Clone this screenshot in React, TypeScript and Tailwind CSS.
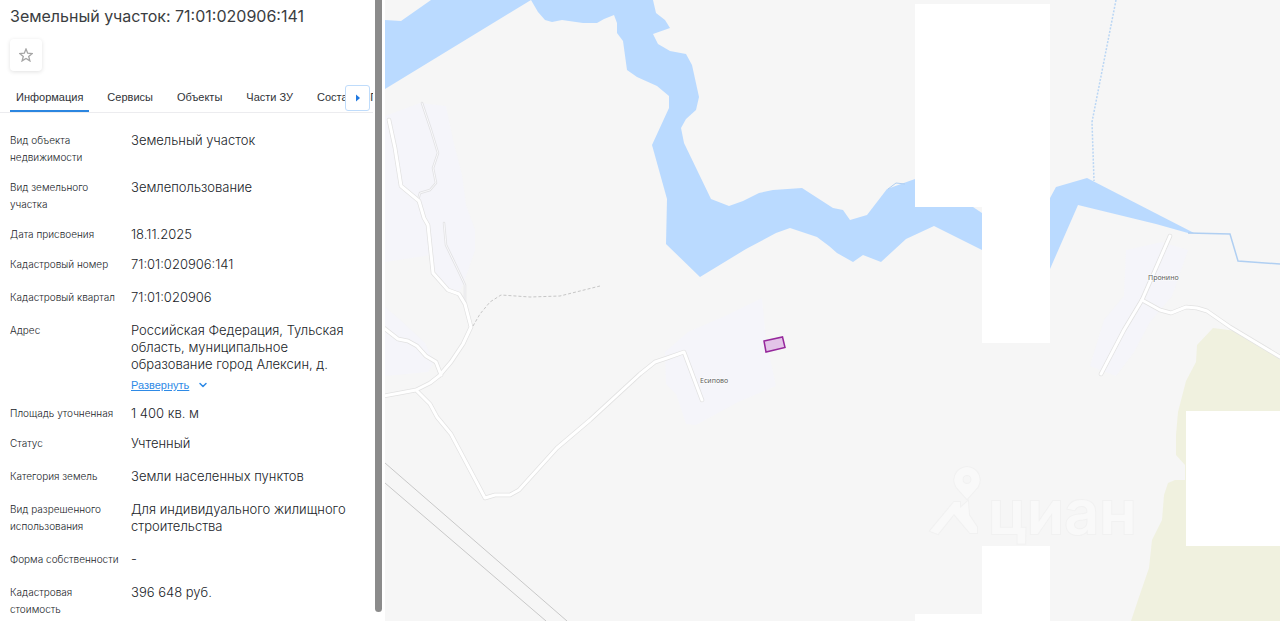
import { useState } from "react";
import { ChevronDown } from "lucide-react";

interface Row {
  label: string;
  value: string;
  gap: string;
  expandable?: boolean;
}

const TABS = ["Информация", "Сервисы", "Объекты", "Части ЗУ", "Состав ЕЗП"];

const ROWS: Row[] = [
  { label: "Вид объекта недвижимости", value: "Земельный участок", gap: "pb-[13px]" },
  { label: "Вид земельного участка", value: "Землепользование", gap: "pb-[13px]" },
  { label: "Дата присвоения", value: "18.11.2025", gap: "pb-[13px]" },
  { label: "Кадастровый номер", value: "71:01:020906:141", gap: "pb-4" },
  { label: "Кадастровый квартал", value: "71:01:020906", gap: "pb-4" },
  {
    label: "Адрес",
    value: "Российская Федерация, Тульская область, муниципальное образование город Алексин, д.",
    gap: "pb-2",
    expandable: true,
  },
  { label: "Площадь уточненная", value: "1 400 кв. м", gap: "pb-[13px]" },
  { label: "Статус", value: "Учтенный", gap: "pb-4" },
  { label: "Категория земель", value: "Земли населенных пунктов", gap: "pb-4" },
  {
    label: "Вид разрешенного использования",
    value: "Для индивидуального жилищного строительства",
    gap: "pb-4",
  },
  { label: "Форма собственности", value: "-", gap: "pb-4" },
  { label: "Кадастровая стоимость", value: "396 648 руб.", gap: "pb-0" },
];

// main roads: drawn twice, grey casing below and white fill on top
const ROADS = [
  "M389 120L395 148L401 186L419 201L424 218L428 225L433 273L448 290L459 294L465 304L471 327L463 344L451 362L439 376L430 383L416 390L400 393L384 396",
  "M384 328L398 339L408 341L417 346L426 356L436 362L441 375",
  "M417 391L430 404L437 417L451 434L485 498L495 495L510 495L519 490L557 448L590 420L640 374L655 362L667 358L684 352L702 400",
  "M1170 236L1142 300L1124 330L1101 374",
  "M1142 300L1160 310L1171 313L1186 307L1197 308L1207 311L1230 327L1280 357",
];

const TRACKS = [
  "M422 103L431 130L438 153L433 168L436 183L430 190L420 193L418 200",
  "M444 223L446 245L459 272L465 285L465 303",
];

function ObjectPanel() {
  const [activeTab, setActiveTab] = useState(TABS[0]);

  return (
    <aside className="flex w-[385px] shrink-0 overflow-hidden bg-white">
      <div className="min-w-0 flex-1">
        <h1 className="px-[10px] pt-1 text-[16px] leading-6 text-[#3a3d41]">
          Земельный участок: 71:01:020906:141
        </h1>

        <button
          type="button"
          aria-label="В избранное"
          className="mt-[11px] ml-[10px] flex size-8 items-center justify-center rounded bg-white text-[#a6a6a6] shadow-[0_1px_4px_rgba(0,0,0,0.12)]"
        >
          <svg width="14" height="14" viewBox="0 0 14 14" fill="none" stroke="currentColor" strokeWidth="1.3">
            <path d="M7 1L8.7 5.200L13.2 5.500L9.700 8.400L10.900 12.900L7 10.400L3.100 12.900L4.300 8.400L0.800 5.500L5.300 5.200Z" />
          </svg>
        </button>

        <div className="relative mt-2 mr-[2px] border-b border-[#ececef]">
          <div role="tablist" className="flex h-[33px] gap-3 overflow-hidden pl-[10px]">
            {TABS.map((tab) => (
              <button
                key={tab}
                type="button"
                role="tab"
                aria-selected={tab === activeTab}
                onClick={() => setActiveTab(tab)}
                className={`shrink-0 border-b-2 px-[6px] pt-1 font-['Liberation_Sans',sans-serif] text-[11px] leading-4 text-[#303338] ${
                  tab === activeTab ? "border-[#2b86e0]" : "border-transparent"
                }`}
              >
                {tab}
              </button>
            ))}
          </div>
          <button
            type="button"
            aria-label="Следующие вкладки"
            className="absolute top-[6px] right-[3px] flex h-[26px] w-[25px] items-center justify-center rounded-[3px] border border-[#bfdcfb] bg-white"
          >
            <svg width="4" height="8" viewBox="0 0 4 8" fill="#1f78e0">
              <path d="M0 0.500L4 4L0 7.500Z" />
            </svg>
          </button>
        </div>

        <dl className="pt-[19px] pl-[10px]">
          {ROWS.map((row) => (
            <div key={row.label} className={`flex ${row.gap}`}>
              <dt className="w-[121px] shrink-0 pr-3 text-[10px] leading-[17px] font-light text-[#202328]">
                {row.label}
              </dt>
              <dd className="w-[224px] text-[13px] leading-[17px] font-light text-[#202328]">
                {row.value}
                {row.expandable && (
                  <button
                    type="button"
                    className="flex items-center gap-2 font-['Liberation_Sans',sans-serif] text-[11px] leading-6 font-normal text-[#2e8ae6]"
                  >
                    <span className="underline">Развернуть</span>
                    <ChevronDown size={12} strokeWidth={3} />
                  </button>
                )}
              </dd>
            </div>
          ))}
        </dl>
      </div>

      <div className="mr-[3px] mb-[9px] w-[7px] rounded-b-full bg-[#8b8b8b]" />
    </aside>
  );
}

function CadastralMap() {
  return (
    <main className="min-w-0 flex-1 overflow-hidden bg-[#f6f6f6]">
      <svg
        className="block h-full w-full"
        viewBox="385 0 895 621"
        preserveAspectRatio="xMinYMin slice"
        role="img"
        aria-label="Карта участка"
      >
        {/* settlements */}
        <g fill="#f5f5fa">
          <path d="M385 116L420 103L446 106L453 140L462 175L466 205L475 230L475 250L463 285L459 292L448 289L433 273L431 255L385 262Z" />
          <path d="M385 307L398 318L425 343L434 362L428 372L385 376Z" />
          <path d="M665 352L688 332L725 316L762 298L766 340L776 386L738 402L696 425L686 424L676 394L666 384Z" />
          <path d="M1126 250L1162 242L1188 250L1172 296L1150 322L1134 352L1116 376L1090 366L1104 320L1124 296Z" />
        </g>

        {/* forest */}
        <path
          fill="#f0f1df"
          d="M1280 356L1236 331L1213 328L1197 345L1196 362L1186 381L1178 412L1176 435L1176 455L1185 465V480H1175L1168 483L1164 495L1162 520L1152 540L1149 568L1138 600L1131 621H1280Z"
        />

        {/* river */}
        <g fill="#badaff">
          <path d="M385 20L401 21L431 0H531L385 89Z" />
          <path d="M531 0L538 12L545 20L552 22L562 20L583 23H597L604 19L614 15L617 23V33L623 41L627 70L637 77L657 86L669 96V108L652 145L667 199L666 244L700 277L746 249L776 233L790 228L817 237L829 246L837 253L853 262L863 255L881 262L906 239L934 226L982 250V213L973 207H915V179L887 189L867 215L850 220L843 210L833 208L802 188L773 190L759 193L743 201L729 206L711 199L684 143L681 128L686 119L696 110L699 97L692 65L686 54L670 51L658 44L653 34L670 28L665 20L656 13L653 0Z" />
          <path d="M1050 198L1056 187L1087 178L1194 233L1188 233L1156 224L1078 205L1050 269Z" />
        </g>
        <g fill="none" stroke="#b0cff2">
          <path strokeWidth="1.500" d="M1188 233L1230 234L1238 261L1280 264" />
          <path d="M888 189L896 183L905 184" />
          <path
            stroke="#bad6f4"
            strokeWidth="1.500"
            strokeDasharray="2 1.500"
            d="M1116 0L1092 122L1094 181"
          />
        </g>

        {/* roads */}
        <g fill="none" strokeLinejoin="round" strokeLinecap="round">
          <g stroke="#e2e2e4" strokeWidth="2.500">
            {TRACKS.map((d) => (
              <path key={d} d={d} />
            ))}
          </g>
          <g stroke="#f8f8fa" strokeWidth="1">
            {TRACKS.map((d) => (
              <path key={d} d={d} />
            ))}
          </g>
          <g stroke="#e2e2e2" strokeWidth="4.500">
            {ROADS.map((d) => (
              <path key={d} d={d} />
            ))}
          </g>
          <g stroke="#ffffff" strokeWidth="3">
            {ROADS.map((d) => (
              <path key={d} d={d} />
            ))}
          </g>
          <path
            stroke="#c6c6c6"
            strokeLinecap="butt"
            strokeDasharray="3 2"
            d="M473 326L480 314L490 302L501 295L530 297L560 296L580 291L600 286"
          />
        </g>

        {/* power lines */}
        <g fill="none" stroke="#c8c8c8">
          <path d="M385 463L567 621" />
          <path d="M385 483L546 621" />
        </g>

        {/* tiles that have not loaded */}
        <g fill="#ffffff">
          <path d="M915 4H1050V343H982V207H915Z" />
          <path d="M1186 411H1280V546H1186Z" />
          <path d="M982 546H1050V621H915V614H982Z" />
        </g>

        {/* selected parcel */}
        <path
          fill="#e3c4e8"
          stroke="#96289c"
          strokeWidth="1.500"
          d="M764 341L782.500 337L785 347.500L766 352Z"
        />

        <g
          fontFamily="'Noto Sans', sans-serif"
          fontSize="7"
          fill="#606060"
          stroke="#ffffff"
          strokeWidth="1"
          paintOrder="stroke"
        >
          <text x="700" y="383">Есипово</text>
          <text x="1148" y="280">Пронино</text>
        </g>

        {/* watermark */}
        <g fill="#f9f9f9" stroke="#f1f1f1" strokeWidth="2" paintOrder="stroke">
          <path
            fillRule="evenodd"
            d="M967 467A13 13 0 0 1 975 490L967 499L959 490A13 13 0 0 1 967 467ZM967 475A4 4 0 1 0 967 484A4 4 0 1 0 967 475Z"
          />
          <path d="M930 531L954 502H960V508L968 501L969 515L977 527V533H970L954 514L938 534Z" />
          <text x="988" y="534" fontFamily="Inter, sans-serif" fontSize="61" fontWeight="600">
            циан
          </text>
        </g>
      </svg>
    </main>
  );
}

export default function App() {
  return (
    <div className="flex h-screen overflow-hidden font-['Inter','Liberation_Sans',sans-serif]">
      <ObjectPanel />
      <CadastralMap />
    </div>
  );
}
